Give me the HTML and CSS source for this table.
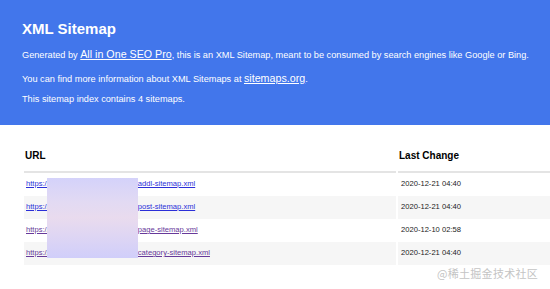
FILE: index.html
```html
<!DOCTYPE html>
<html>
<head>
    <title>XML Sitemap</title>
    <link rel="stylesheet" href="styles.css">
</head>
<body>
    <div class="header">
        <h1>XML Sitemap</h1>
        <p class="intro">Generated by <a href="#">All in One SEO Pro</a>, this is an XML Sitemap, meant to be consumed by search engines like Google or Bing.</p>
        <p class="intro">You can find more information about XML Sitemaps at <a href="#">sitemaps.org</a>.</p>
        <p class="intro last">This sitemap index contains 4 sitemaps.</p>
    </div>

    <div class="content">
        <table class="sitemaps">
            <thead>
                <tr>
                    <th class="col-url">URL</th>
                    <th class="col-date">Last Change</th>
                </tr>
            </thead>
            <tbody>
                <tr>
                    <td class="col-url"><a href="#">https://<span class="host">example.com/</span>addl-sitemap.xml</a></td>
                    <td class="col-date">2020-12-21 04:40</td>
                </tr>
                <tr class="alt">
                    <td class="col-url"><a href="#">https://<span class="host">example.com/</span>post-sitemap.xml</a></td>
                    <td class="col-date">2020-12-21 04:40</td>
                </tr>
                <tr>
                    <td class="col-url"><a class="visited" href="#">https://<span class="host">example.com/</span>page-sitemap.xml</a></td>
                    <td class="col-date">2020-12-10 02:58</td>
                </tr>
                <tr class="alt">
                    <td class="col-url"><a class="visited" href="#">https://<span class="host">example.com/</span>category-sitemap.xml</a></td>
                    <td class="col-date">2020-12-21 04:40</td>
                </tr>
            </tbody>
        </table>
        <div class="blur"></div>
    </div>

    <div class="watermark">@稀土掘金技术社区</div>
</body>
</html>
```

FILE: styles.css
```css
html, body { margin: 0; padding: 0; }
body { font-family: "Liberation Sans", Arial, sans-serif; color: #000; background: #fff; width: 550px; height: 289px; overflow: hidden; position: relative; }

.header { background: #4276eb; color: #fff; padding: 20px 10px 21px 22px; height: 84px; }
h1 { font-size: 15px; line-height: 18px; margin: 0 0 9px; font-weight: bold; }
.intro { font-size: 9.2px; line-height: 14px; margin: 0 0 9px; white-space: nowrap; }
.intro.last { margin-top: -3px; margin-bottom: 0; }
.intro a { color: #fff; font-size: 10.7px; text-decoration: underline; }

.content { position: relative; padding: 17px 0 0 22px; overflow: hidden; }
.sitemaps { border-collapse: separate; border-spacing: 2px 0; width: 540px; }
.sitemaps th { text-align: left; font-size: 10px; line-height: 14px; padding: 7px 3px 8px 1px; border-bottom: 2px solid #e4e4e4; }
.sitemaps th.col-url { width: 368px; }
.sitemaps td { font-size: 7.6px; line-height: 9px; padding: 6px 3px 8px; white-space: nowrap; color: #222; }
.sitemaps td.col-url { padding-left: 2px; }
.sitemaps tr.alt td { background: #f6f6f6; }
.sitemaps a { color: #2b2fd8; text-decoration: underline; }
.sitemaps a.visited { color: #67399a; }
.host { display: inline-block; width: 89px; }

.blur { position: absolute; left: 47px; top: 53px; width: 91px; height: 80px; background: linear-gradient(#d4d2fa, #e2daf3 30%, #e9dbee 50%, #ddd5f4 75%, #d0cefa); }

.watermark { position: absolute; left: 437px; top: 265px; font-family: "Noto Sans CJK SC", sans-serif; font-size: 11px; line-height: 16px; color: #c4c4c4; letter-spacing: 0.3px; }
```
